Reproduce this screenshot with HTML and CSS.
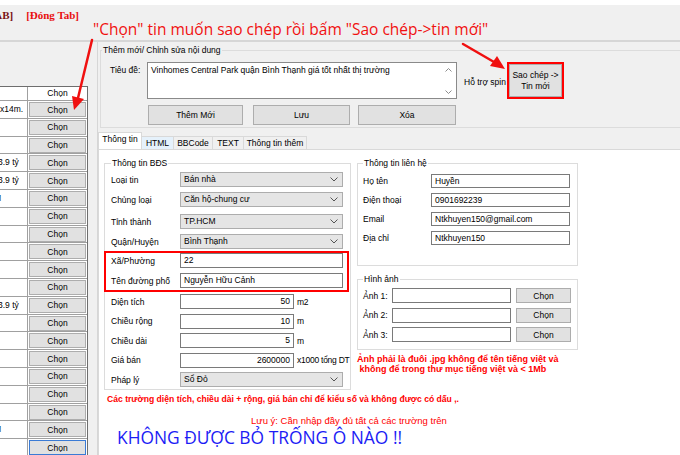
FILE: index.html
```html
<!DOCTYPE html>
<html lang="vi">
<head>
    <meta charset="UTF-8">
    <title>Đăng tin BĐS</title>
    <link rel="stylesheet" href="styles.css">
</head>
<body>
<div class="window">
    <div class="topbar">
        <span class="tab-cur">[TAB]</span>
        <span class="tab-close">[Đóng Tab]</span>
        <span class="callout">"Chọn" tin muốn sao chép rồi bấm "Sao chép-&gt;tin mới"</span>
    </div>

    <div class="main">
        <!-- danh sach tin -->
        <div class="left">
            <div class="grid">
                <div class="grid-head">
                    <div class="col-data"></div>
                    <div class="col-btn">Chọn</div>
                </div>
                <div class="grid-row"><div class="col-data"><span>x14m.</span></div><div class="col-btn"><button class="cell-btn">Chọn</button></div></div>
                <div class="grid-row"><div class="col-data"></div><div class="col-btn"><button class="cell-btn">Chọn</button></div></div>
                <div class="grid-row"><div class="col-data"></div><div class="col-btn"><button class="cell-btn">Chọn</button></div></div>
                <div class="grid-row"><div class="col-data"><span class="cut">3.9 tỷ</span></div><div class="col-btn"><button class="cell-btn">Chọn</button></div></div>
                <div class="grid-row"><div class="col-data"><span class="cut">3.9 tỷ</span></div><div class="col-btn"><button class="cell-btn">Chọn</button></div></div>
                <div class="grid-row"><div class="col-data"><span class="sliver">M</span></div><div class="col-btn"><button class="cell-btn">Chọn</button></div></div>
                <div class="grid-row"><div class="col-data"></div><div class="col-btn"><button class="cell-btn">Chọn</button></div></div>
                <div class="grid-row"><div class="col-data"></div><div class="col-btn"><button class="cell-btn">Chọn</button></div></div>
                <div class="grid-row"><div class="col-data"></div><div class="col-btn"><button class="cell-btn">Chọn</button></div></div>
                <div class="grid-row"><div class="col-data"></div><div class="col-btn"><button class="cell-btn">Chọn</button></div></div>
                <div class="grid-row"><div class="col-data"></div><div class="col-btn"><button class="cell-btn">Chọn</button></div></div>
                <div class="grid-row"><div class="col-data"><span class="cut">3.9 tỷ</span></div><div class="col-btn"><button class="cell-btn">Chọn</button></div></div>
                <div class="grid-row"><div class="col-data"></div><div class="col-btn"><button class="cell-btn">Chọn</button></div></div>
                <div class="grid-row"><div class="col-data"></div><div class="col-btn"><button class="cell-btn">Chọn</button></div></div>
                <div class="grid-row"><div class="col-data"></div><div class="col-btn"><button class="cell-btn">Chọn</button></div></div>
                <div class="grid-row"><div class="col-data"></div><div class="col-btn"><button class="cell-btn">Chọn</button></div></div>
                <div class="grid-row"><div class="col-data"></div><div class="col-btn"><button class="cell-btn">Chọn</button></div></div>
                <div class="grid-row"><div class="col-data"></div><div class="col-btn"><button class="cell-btn">Chọn</button></div></div>
                <div class="grid-row"><div class="col-data"><span class="sliver">M</span></div><div class="col-btn"><button class="cell-btn">Chọn</button></div></div>
                <div class="grid-row"><div class="col-data"></div><div class="col-btn"><button class="cell-btn focused">Chọn</button></div></div>
            </div>
        </div>

        <div class="splitter"></div>

        <!-- them moi / chinh sua -->
        <div class="right">
            <fieldset class="group edit-group">
                <legend>Thêm mới/ Chỉnh sửa nội dung</legend>
                <div class="title-row">
                    <label class="title-label">Tiêu đề:</label>
                    <div class="memo">
                        <div class="memo-text">Vinhomes Central Park quận Bình Thạnh giá tốt nhất thị trường</div>
                        <div class="memo-scroll">
                            <svg width="7" height="4"><path d="M0.5 3.5 L3.5 0.5 L6.5 3.5" stroke="#8c8c8c" fill="none"/></svg>
                            <svg width="7" height="4"><path d="M0.5 0.5 L3.5 3.5 L6.5 0.5" stroke="#8c8c8c" fill="none"/></svg>
                        </div>
                    </div>
                    <span class="spin">Hỗ trợ spin</span>
                    <div class="redbox copy-box">
                        <button class="btn copy-btn">Sao chép -&gt;<br>Tin mới</button>
                    </div>
                </div>
                <div class="action-row">
                    <button class="btn btn-add">Thêm Mới</button>
                    <button class="btn btn-save">Lưu</button>
                    <button class="btn btn-del">Xóa</button>
                </div>
            </fieldset>

            <div class="tabs">
                <div class="tab active tab-info">Thông tin</div>
                <div class="tab hover tab-html">HTML</div>
                <div class="tab tab-bb">BBCode</div>
                <div class="tab tab-text">TEXT</div>
                <div class="tab tab-more">Thông tin thêm</div>
            </div>

            <div class="tab-page">
                <div class="cols">
                    <fieldset class="group bds">
                        <legend>Thông tin BĐS</legend>
                        <div class="frow"><label>Loại tin</label><div class="select">Bán nhà<svg width="8" height="5"><path d="M0.5 0.5 L4 4 L7.5 0.5" stroke="#555" fill="none"/></svg></div></div>
                        <div class="frow gap-after"><label>Chủng loại</label><div class="select">Căn hộ-chung cư<svg width="8" height="5"><path d="M0.5 0.5 L4 4 L7.5 0.5" stroke="#555" fill="none"/></svg></div></div>
                        <div class="frow"><label>Tỉnh thành</label><div class="select">TP.HCM<svg width="8" height="5"><path d="M0.5 0.5 L4 4 L7.5 0.5" stroke="#555" fill="none"/></svg></div></div>
                        <div class="frow tight"><label>Quận/Huyện</label><div class="select">Bình Thạnh<svg width="8" height="5"><path d="M0.5 0.5 L4 4 L7.5 0.5" stroke="#555" fill="none"/></svg></div></div>
                        <div class="redbox street-box">
                            <div class="frow"><label>Xã/Phường</label><div class="input">22</div></div>
                            <div class="frow last"><label>Tên đường phố</label><div class="input">Nguyễn Hữu Cảnh</div></div>
                        </div>
                        <div class="frow num"><label>Diện tích</label><div class="input right-text">50</div><span class="unit">m2</span></div>
                        <div class="frow num"><label>Chiều rộng</label><div class="input right-text">10</div><span class="unit">m</span></div>
                        <div class="frow num"><label>Chiều dài</label><div class="input right-text">5</div><span class="unit">m</span></div>
                        <div class="frow num"><label>Giá bán</label><div class="input right-text">2600000</div><span class="unit">x1000 tổng DT</span></div>
                        <div class="frow last"><label>Pháp lý</label><div class="select">Sổ Đỏ<svg width="8" height="5"><path d="M0.5 0.5 L4 4 L7.5 0.5" stroke="#555" fill="none"/></svg></div></div>
                    </fieldset>

                    <div class="side">
                        <fieldset class="group contact">
                            <legend>Thông tin liên hệ</legend>
                            <div class="crow"><label>Họ tên</label><div class="input">Huyền</div></div>
                            <div class="crow"><label>Điện thoại</label><div class="input">0901692239</div></div>
                            <div class="crow"><label>Email</label><div class="input">Ntkhuyen150@gmail.com</div></div>
                            <div class="crow"><label>Địa chỉ</label><div class="input">Ntkhuyen150</div></div>
                        </fieldset>
                        <fieldset class="group images">
                            <legend>Hình ảnh</legend>
                            <div class="irow"><label>Ảnh 1:</label><div class="input"></div><button class="btn pick">Chọn</button></div>
                            <div class="irow"><label>Ảnh 2:</label><div class="input"></div><button class="btn pick">Chọn</button></div>
                            <div class="irow"><label>Ảnh 3:</label><div class="input"></div><button class="btn pick">Chọn</button></div>
                        </fieldset>
                        <p class="note-img">Ảnh phải là đuôi .jpg không để tên tiếng việt và<br>&nbsp;không để trong thư mục tiếng việt và &lt; 1Mb</p>
                    </div>
                </div>
                <p class="note-num">Các trường diện tích, chiều dài + rộng, giá bán chỉ để kiểu số và không được có dấu ,.</p>
                <p class="note-fill">Lưu ý: Cần nhập đầy đủ tất cả các trường trên</p>
                <p class="warn">KHÔNG ĐƯỢC BỎ TRỐNG Ô NÀO !!</p>
            </div>
        </div>
    </div>

    <!-- mui ten chu thich -->
    <svg class="arrows" width="680" height="455">
        <g stroke="#f01010" stroke-width="2.5" fill="#f01010" stroke-linecap="round">
            <line x1="92" y1="40" x2="78" y2="98"/>
            <polygon points="74,110 72,96 84,99" stroke="none"/>
            <line x1="463" y1="44" x2="494" y2="62"/>
            <polygon points="505,69 490,66 497,56" stroke="none"/>
        </g>
    </svg>
</div>
</body>
</html>
```

FILE: styles.css
```css
body {
    margin: 0;
    font-family: "Liberation Sans", Arial, sans-serif;
    font-size: 8.5px;
    color: #000;
}
.window {
    width: 680px;
    height: 455px;
    position: relative;
    overflow: hidden;
    background-color: #f0f0f0;
}
button {
    font-family: inherit;
    font-size: inherit;
    color: #000;
    padding: 0;
}
label {
    flex-shrink: 0;
}

/* top bar */
.topbar {
    height: 35px;
    border-top: 5px solid #fff;
    border-bottom: 2px solid #d6d6d6;
    display: flex;
    align-items: flex-start;
    white-space: nowrap;
}
.tab-cur,
.tab-close {
    font-family: "Liberation Serif", serif;
    font-weight: bold;
    font-size: 11px;
    margin-top: 4px;
}
.tab-cur {
    color: #7a1414;
    margin-left: -16px;
}
.tab-close {
    color: #e81010;
    margin-left: 13px;
}
.callout {
    font-family: "Open Sans", sans-serif;
    font-size: 15.5px;
    color: #f01010;
    margin-left: 14px;
    margin-top: 14px;
    line-height: 20px;
}

.main {
    display: flex;
    height: 413px;
}

/* grid */
.left {
    width: 88px;
    padding-top: 44px;
}
.grid {
    background-color: #fff;
    border-top: 1px solid #6e6e6e;
    border-right: 1px solid #6e6e6e;
    height: 400px;
}
.grid-head,
.grid-row {
    display: flex;
    border-bottom: 1px solid #a0a0a0;
}
.grid-head {
    height: 13px;
    line-height: 13px;
}
.grid-row {
    height: 16.8px;
}
.col-data {
    width: 27px;
    border-right: 1px solid #a0a0a0;
    overflow: hidden;
    white-space: nowrap;
    line-height: 16px;
}
.col-data .cut {
    margin-left: -2px;
}
.col-data .sliver {
    margin-left: -6px;
}
.col-btn {
    flex: 1;
    text-align: center;
}
.cell-btn {
    display: block;
    width: 57px;
    height: 15px;
    margin: 1px 0 0 1px;
    background-color: #e1e1e1;
    border: 1px solid #adadad;
}
.cell-btn.focused {
    border-color: #3a7bd5;
}

.splitter {
    width: 9px;
}

/* right panel */
.right {
    flex: 1;
    border-left: 1px solid #d6d6d6;
    display: flex;
    flex-direction: column;
}
.group {
    border: 1px solid #dcdcdc;
    margin: 0;
    min-width: 0;
}
.group legend {
    padding: 0 1px;
    line-height: 12px;
}
.edit-group {
    margin: 2px -30px 0 2px;
    padding: 6px 0 2px 9px;
}
.edit-group legend {
    margin-left: -8px;
}
.title-row {
    display: flex;
    height: 37px;
}
.title-label {
    width: 37px;
    padding-top: 3px;
}
.memo {
    width: 310px;
    box-sizing: border-box;
    border: 1px solid #8a8a8a;
    background-color: #fff;
    display: flex;
    flex-shrink: 0;
}
.memo-text {
    flex: 1;
    padding: 2px 3px;
}
.memo-scroll {
    width: 15px;
    display: flex;
    flex-direction: column;
    justify-content: space-between;
    align-items: center;
    padding: 5px 0 4px;
}
.memo-scroll svg {
    display: block;
}
.spin {
    width: 40px;
    margin-left: 7px;
    align-self: center;
    padding-top: 2px;
    white-space: nowrap;
    flex-shrink: 0;
}
.redbox {
    border: 2px solid #f00;
}
.copy-box {
    width: 57px;
    box-sizing: border-box;
    margin-left: 3px;
    flex-shrink: 0;
}
.btn {
    background-color: #e1e1e1;
    border: 1px solid #adadad;
}
.copy-btn {
    width: 100%;
    height: 100%;
    line-height: 11px;
}
.action-row {
    display: flex;
    margin-top: 6px;
    padding-left: 38px;
}
.action-row .btn {
    height: 20px;
}
.btn-add { width: 95px; }
.btn-save { width: 97px; margin-left: 10px; }
.btn-del { width: 98px; margin-left: 8px; }

/* tabs */
.tabs {
    display: flex;
    align-items: flex-end;
    height: 15px;
    margin-top: 6px;
}
.tab {
    height: 12px;
    line-height: 12px;
    text-align: center;
    white-space: nowrap;
    border: 1px solid #d9d9d9;
    border-bottom: none;
    background-color: #f0f0f0;
    margin-left: -1px;
}
.tab.active {
    height: 16px;
    background-color: #fff;
    margin-left: 0;
    position: relative;
    z-index: 1;
}
.tab.hover {
    background-color: #e5f1fb;
}
.tab-info { width: 42px; }
.tab-html { width: 31px; }
.tab-bb { width: 38px; }
.tab-text { width: 30px; }
.tab-more { width: 62px; }

.tab-page {
    flex: 1;
    background-color: #fff;
    border-top: 1px solid #d9d9d9;
    border-left: 1px solid #d9d9d9;
    padding: 7px 0 0 5px;
}
.cols {
    display: flex;
    align-items: flex-start;
    gap: 6px;
}

/* thong tin bds */
.bds {
    width: 247px;
    box-sizing: border-box;
    padding: 3px 6px 2px 6px;
}
.frow {
    display: flex;
    align-items: center;
    height: 15px;
    margin-bottom: 5px;
    white-space: nowrap;
}
.frow.gap-after {
    margin-bottom: 7px;
}
.frow.tight {
    margin-bottom: 2px;
}
.frow.num {
    margin-bottom: 4.5px;
}
.frow.last {
    margin-bottom: 0;
}
.frow label {
    width: 69px;
}
.select,
.input {
    height: 15px;
    box-sizing: border-box;
    line-height: 13px;
    padding: 0 3px;
    flex-shrink: 0;
}
.select {
    width: 163px;
    background-color: #e5e5e5;
    border: 1px solid #adadad;
    display: flex;
    justify-content: space-between;
    align-items: center;
}
.select svg {
    margin-right: 1px;
}
.input {
    background-color: #fff;
    border: 1px solid #7a7a7a;
}
.frow .input {
    width: 163px;
}
.frow.num .input {
    width: 114px;
}
.right-text {
    text-align: right;
}
.unit {
    margin-left: 3px;
    letter-spacing: -0.25px;
}
.street-box {
    margin: 0 -5px 2px -7px;
    padding: 0 4px 2px 5px;
}

/* lien he + hinh anh */
.side {
    width: 221px;
}
.contact {
    padding: 5px 7px 20px 5px;
}
.crow,
.irow {
    display: flex;
    align-items: center;
    white-space: nowrap;
}
.crow {
    height: 14px;
    margin-bottom: 5px;
}
.crow:last-child {
    margin-bottom: 0;
}
.crow label {
    width: 68px;
}
.crow .input {
    width: 139px;
    height: 14px;
    line-height: 12px;
}
.images {
    margin-top: 7px;
    padding: 3px 5px 7px 5px;
}
.irow {
    height: 15px;
    margin-bottom: 4.5px;
}
.irow:last-child {
    margin-bottom: 0;
}
.irow label {
    width: 29px;
}
.irow .input {
    width: 119px;
}
.pick {
    width: 55px;
    height: 15px;
    margin-left: 5px;
}

/* ghi chu */
.note-img,
.note-num {
    color: #f00;
    font-weight: bold;
    font-size: 9px;
    line-height: 10px;
    margin: 0;
    white-space: nowrap;
}
.note-img {
    margin-top: 4px;
}
.note-num {
    font-size: 8.6px;
    margin-top: 4px;
    padding-left: 3px;
}
.note-fill {
    color: #f00;
    font-size: 9.5px;
    line-height: 10px;
    margin: 12px 0 0 147px;
    white-space: nowrap;
}
.warn {
    font-family: "Open Sans", sans-serif;
    color: #1c1cf5;
    font-size: 17.4px;
    line-height: 20px;
    margin: 1px 0 0 13px;
    white-space: nowrap;
}

.arrows {
    position: absolute;
    left: 0;
    top: 0;
    pointer-events: none;
}
```
